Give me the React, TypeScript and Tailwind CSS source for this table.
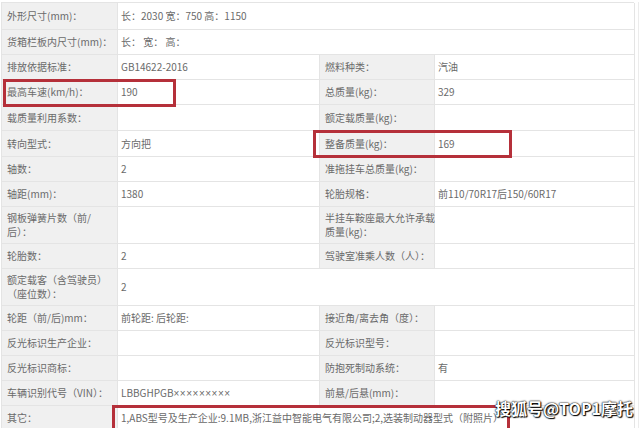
import React from "react";

type Cell = { t: React.ReactNode; label?: boolean; span?: number };

const rows: { h: number; cells: Cell[] }[] = [
  { h: 27, cells: [{ t: "外形尺寸(mm)：", label: true }, { t: "长：2030 宽：750 高：1150", span: 3 }] },
  { h: 25, cells: [{ t: "货箱栏板内尺寸(mm)：", label: true }, { t: "长： 宽： 高：", span: 3 }] },
  { h: 25, cells: [{ t: "排放依据标准：", label: true }, { t: "GB14622-2016" }, { t: "燃料种类：", label: true }, { t: "汽油" }] },
  { h: 25, cells: [{ t: "最高车速(km/h)：", label: true }, { t: "190" }, { t: "总质量(kg)：", label: true }, { t: "329" }] },
  { h: 26, cells: [{ t: "载质量利用系数：", label: true }, { t: "" }, { t: "额定载质量(kg)：", label: true }, { t: "" }] },
  { h: 26, cells: [{ t: "转向型式：", label: true }, { t: "方向把" }, { t: "整备质量(kg)：", label: true }, { t: "169" }] },
  { h: 25, cells: [{ t: "轴数：", label: true }, { t: "2" }, { t: "准拖挂车总质量(kg)：", label: true }, { t: "" }] },
  { h: 25, cells: [{ t: "轴距(mm)：", label: true }, { t: "1380" }, { t: "轮胎规格：", label: true }, { t: "前110/70R17后150/60R17" }] },
  {
    h: 37,
    cells: [
      { t: <>钢板弹簧片数（前/<br />后）：</>, label: true },
      { t: "" },
      { t: <>半挂车鞍座最大允许承载<br />质量(kg)：</>, label: true },
      { t: "" },
    ],
  },
  { h: 25, cells: [{ t: "轮胎数：", label: true }, { t: "2" }, { t: "驾驶室准乘人数（人）：", label: true }, { t: "" }] },
  { h: 37, cells: [{ t: <>额定载客（含驾驶员）<br />（座位数）：</>, label: true }, { t: "2", span: 3 }] },
  { h: 25, cells: [{ t: "轮距（前/后)mm：", label: true }, { t: "前轮距: 后轮距:" }, { t: "接近角/离去角（度）：", label: true }, { t: "" }] },
  { h: 25, cells: [{ t: "反光标识生产企业：", label: true }, { t: "" }, { t: "反光标识型号：", label: true }, { t: "" }] },
  { h: 25, cells: [{ t: "反光标识商标：", label: true }, { t: "" }, { t: "防抱死制动系统：", label: true }, { t: "有" }] },
  {
    h: 25,
    cells: [
      { t: "车辆识别代号（VIN）：", label: true },
      {
        t: (
          <>
            LBBGHPGB
            <span className="tracking-[0.5px]" style={{ fontFamily: '"Liberation Sans", sans-serif' }}>
              ×××××××××
            </span>
          </>
        ),
      },
      { t: "前悬/后悬(mm)：", label: true },
      { t: "" },
    ],
  },
  {
    h: 25,
    cells: [
      { t: "其它：", label: true },
      { t: "1,ABS型号及生产企业:9.1MB,浙江益中智能电气有限公司;2,选装制动器型式（附照片）", span: 3 },
    ],
  },
];

export default function App() {
  return (
    <div
      className="relative w-[641px] h-[428px] overflow-hidden bg-white"
      style={{ fontFamily: '"Noto Sans CJK SC", "Noto Sans", sans-serif' }}
    >
      <div className="pt-[2px] pl-[1px] flex">
        <div className="w-[633px] border-t border-l border-[#e4e4e4] grid grid-cols-[116px_202px_115px_200px] text-[10px] text-[#6a6a6a]">
          {rows.map((r, i) =>
            r.cells.map((c, j) => (
              <div
                key={i + "-" + j}
                className={
                  "flex items-center border-b border-r border-[#e4e4e4] leading-[14px] whitespace-nowrap " +
                  (c.label ? "bg-[#f0f0f0] pl-[5px] " : "bg-white pl-[3px] ") +
                  (c.span === 3 ? "col-span-3" : "")
                }
                style={{ height: r.h }}
              >
                <div>{c.t}</div>
              </div>
            ))
          )}
        </div>
        <div className="ml-[4px] w-px h-[428px] bg-[#ececec]" />
      </div>

      {/* red highlight boxes */}
      <div className="absolute left-[3px] top-[79px] w-[173px] h-[28px] border-[3px] border-[#b5303a]" />
      <div className="absolute left-[313px] top-[130px] w-[199px] h-[28px] border-[3px] border-[#b5303a]" />
      <div className="absolute left-[112px] top-[405px] w-[398px] h-[40px] border-[3px] border-[#b5303a]" />

      {/* watermark */}
      <div className="absolute left-[495px] top-[397px] text-[16px] font-bold text-white whitespace-nowrap leading-[22px] [text-shadow:0_0_1px_#000,0_0_2px_#000,1px_1px_1px_#000]">
        搜狐号@TOP1摩托
      </div>
    </div>
  );
}
